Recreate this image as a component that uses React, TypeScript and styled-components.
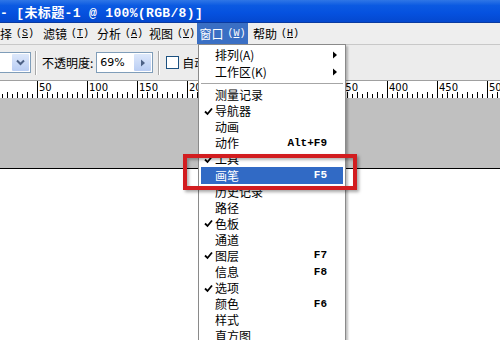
import React from "react";
import styled, { createGlobalStyle } from "styled-components";

const Global = createGlobalStyle`
  html, body { margin: 0; padding: 0; }
  body { width: 500px; height: 340px; overflow: hidden; background: #fff;
    font-family: "Noto Sans CJK SC", "DejaVu Sans", sans-serif; font-size: 12px; }
`;

const Page = styled.div`
  position: relative;
  width: 500px;
  height: 340px;
  display: flex;
  flex-direction: column;
  overflow: hidden;
`;

const TitleBar = styled.div`
  height: 23px;
  flex: none;
  background: linear-gradient(#2f76e6 0%, #0b5ae2 25%, #0551df 60%, #0448cf 100%);
  border-bottom: 1px solid #0a3aa0;
  box-sizing: border-box;
  color: #fff;
  font-family: "Liberation Mono", "Noto Sans CJK SC", monospace;
  font-weight: bold;
  font-size: 13px;
  display: flex;
  align-items: center;
  white-space: pre;
  letter-spacing: 0.35px;
`;

const MenuBar = styled.div`
  height: 21px;
  flex: none;
  background: #eeeeee;
  border-bottom: 1px solid #c8c8c8;
  display: flex;
  align-items: stretch;
`;

const MenuTitle = styled.div<{ $active?: boolean; $w: number; $left?: boolean }>`
  width: ${(p) => p.$w}px;
  flex: none;
  display: flex;
  align-items: center;
  justify-content: ${(p) => (p.$left ? "flex-start" : "center")};
  box-sizing: border-box;
  font-size: 12px;
  color: ${(p) => (p.$active ? "#fff" : "#000")};
  background: ${(p) => (p.$active ? "#3a6fc4" : "transparent")};
  white-space: nowrap;
`;

const Key = styled.span`
  font-size: 10px;
  font-family: "Liberation Mono", monospace;
  margin-left: 4px;
  & u { text-underline-offset: 1px; }
`;

const OptionsBar = styled.div`
  height: 35px;
  flex: none;
  background: #ececec;
  display: flex;
  align-items: center;
`;

const ComboBox = styled.div<{ $w: number; $noLeft?: boolean }>`
  width: ${(p) => p.$w}px;
  height: 21px;
  box-sizing: border-box;
  border: 1px solid #7f9db9;
  border-left-width: ${(p) => (p.$noLeft ? 0 : 1)}px;
  background: #fff;
  display: flex;
  align-items: stretch;
`;

const ComboText = styled.div`
  flex: 1;
  display: flex;
  align-items: center;
  padding-left: 3px;
  font-family: "DejaVu Sans", sans-serif;
  font-size: 11px;
`;

const ComboButton = styled.div`
  width: 17px;
  background: linear-gradient(#dde8fb, #b9cdf3);
  border: 1px solid #fff;
  border-radius: 2px;
  display: flex;
  align-items: center;
  justify-content: center;
`;

const Sep = styled.div<{ $ml: number; $mr: number }>`
  width: 1px;
  height: 24px;
  background: #a8a8a8;
  border-right: 1px solid #fff;
  margin-left: ${(p) => p.$ml}px;
  margin-right: ${(p) => p.$mr}px;
`;

const Label = styled.div<{ $mr: number }>`
  font-size: 12px;
  margin-right: ${(p) => p.$mr}px;
  white-space: nowrap;
`;

const CheckBox = styled.div`
  width: 11px;
  height: 11px;
  border: 1px solid #1c5180;
  background: #fff;
  margin-right: 3px;
`;

const RulerWrap = styled.div`
  height: 17px;
  flex: none;
  background: #fff;
  border-top: 1px solid #a0a0a0;
  & svg { display: block; }
`;

const GrayArea = styled.div`
  height: 70px;
  flex: none;
  background: #c0c0c0;
  border-bottom: 1px solid #000;
`;

const WhiteArea = styled.div`
  flex: 1;
  background: #fff;
`;

const Dropdown = styled.div`
  position: absolute;
  left: 198px;
  top: 44px;
  width: 148px;
  bottom: -10px;
  box-sizing: border-box;
  background: #fff;
  border: 1px solid #8a8a8a;
  box-shadow: 2px 2px 2px rgba(0, 0, 0, 0.25);
  padding: 1px 2px;
  display: flex;
  flex-direction: column;
`;

const Item = styled.div<{ $active?: boolean; $h: number }>`
  height: ${(p) => p.$h}px;
  flex: none;
  display: grid;
  grid-template-columns: 14px 1fr auto 16px;
  align-items: center;
  color: ${(p) => (p.$active ? "#fff" : "#000")};
  background: ${(p) => (p.$active ? "#316ac5" : "transparent")};
  font-size: 12px;
  line-height: 1;
`;

const CheckCell = styled.span`
  padding-left: 3px;
  display: flex;
  align-items: center;
`;

const ArrowCell = styled.span`
  display: flex;
  justify-content: center;
`;

const Shortcut = styled.span`
  font-family: "Liberation Mono", monospace;
  font-size: 11px;
  font-weight: bold;
`;

const MenuSep = styled.div`
  height: 7px;
  flex: none;
  display: flex;
  align-items: center;
  &::after { content: ""; display: block; width: 100%; height: 1px; background: #a6a6a6; }
`;

const RedBox = styled.div`
  position: absolute;
  left: 183px;
  top: 154px;
  width: 174px;
  height: 36px;
  box-sizing: border-box;
  border: 4px solid #d21d20;
  box-shadow: 2px 2px 3px rgba(0, 0, 0, 0.35), inset 2px 2px 3px rgba(0, 0, 0, 0.3);
  pointer-events: none;
`;

const Check = () => (
  <svg width="9" height="9" viewBox="0 0 9 9">
    <path d="M1 4.5 L3.5 7 L8 1.5" stroke="#000" strokeWidth="1.8" fill="none" />
  </svg>
);

const SubArrow = () => (
  <svg width="8" height="8" viewBox="0 0 8 8">
    <path d="M2 0.5 L6 4 L2 7.5 Z" fill="#000" />
  </svg>
);

const Ruler = () => {
  const ticks: React.ReactNode[] = [];
  const labels: React.ReactNode[] = [];
  const origin = -13;
  for (let u = 0; u <= 520; u += 5) {
    const x = origin + u + 0.5;
    if (x < 0 || x > 500) continue;
    let h = 4;
    if (u % 50 === 0) h = 17;
    else if (u % 10 === 0) h = 6;
    ticks.push(<line key={u} x1={x} x2={x} y1={17 - h} y2={17} stroke="#000" strokeWidth="1" />);
    if (u % 50 === 0) {
      labels.push(
        <text key={"t" + u} x={x + 1.5} y={9.5} fontSize="10" fontFamily="DejaVu Sans, sans-serif" fill="#000">
          {u}
        </text>
      );
    }
  }
  return (
    <svg width="500" height="17">
      {ticks}
      {labels}
    </svg>
  );
};

type MI = { label: string; check?: boolean; sc?: string; sub?: boolean; active?: boolean };
const topItems: MI[] = [
  { label: "排列(A)", sub: true },
  { label: "工作区(K)", sub: true },
];
const items: MI[] = [
  { label: "测量记录" },
  { label: "导航器", check: true },
  { label: "动画" },
  { label: "动作", sc: "Alt+F9" },
  { label: "工具", check: true },
  { label: "画笔", sc: "F5", active: true },
  { label: "历史记录" },
  { label: "路径" },
  { label: "色板", check: true },
  { label: "通道" },
  { label: "图层", check: true, sc: "F7" },
  { label: "信息", sc: "F8" },
  { label: "选项", check: true },
  { label: "颜色", sc: "F6" },
  { label: "样式" },
  { label: "直方图" },
];

const renderItem = (m: MI, h: number, i: number) => (
  <Item key={i} $h={h} $active={m.active}>
    <CheckCell>{m.check ? <Check /> : null}</CheckCell>
    <span>{m.label}</span>
    <Shortcut>{m.sc}</Shortcut>
    <ArrowCell>{m.sub ? <SubArrow /> : null}</ArrowCell>
  </Item>
);

export default function App() {
  return (
    <Page>
      <Global />
      <TitleBar>{"- [未标题-1 @ 100%(RGB/8)]"}</TitleBar>
      <MenuBar>
        <MenuTitle $w={39} $left>
          择<Key>(<u>S</u>)</Key>
        </MenuTitle>
        <MenuTitle $w={54}>
          滤镜<Key>(<u>T</u>)</Key>
        </MenuTitle>
        <MenuTitle $w={54}>
          分析<Key>(<u>A</u>)</Key>
        </MenuTitle>
        <MenuTitle $w={50}>
          视图<Key>(<u>V</u>)</Key>
        </MenuTitle>
        <MenuTitle $w={51} $active>
          窗口<Key>(<u>W</u>)</Key>
        </MenuTitle>
        <MenuTitle $w={56}>
          帮助<Key>(<u>H</u>)</Key>
        </MenuTitle>
      </MenuBar>
      <OptionsBar>
        <ComboBox $w={31} $noLeft>
          <ComboText />
          <ComboButton>
            <svg width="9" height="7" viewBox="0 0 9 7">
              <path d="M1 1.5 L4.5 5 L8 1.5" stroke="#4d6185" strokeWidth="2" fill="none" />
            </svg>
          </ComboButton>
        </ComboBox>
        <Sep $ml={4} $mr={5} />
        <Label $mr={3}>不透明度:</Label>
        <ComboBox $w={57}>
          <ComboText>69%</ComboText>
          <ComboButton>
            <svg width="6" height="8" viewBox="0 0 6 8">
              <path d="M1 0.5 L5 4 L1 7.5 Z" fill="#4d6185" />
            </svg>
          </ComboButton>
        </ComboBox>
        <Sep $ml={5} $mr={6} />
        <CheckBox />
        <Label $mr={0}>自动</Label>
      </OptionsBar>
      <RulerWrap>
        <Ruler />
      </RulerWrap>
      <GrayArea />
      <WhiteArea />
      <Dropdown>
        {topItems.map((m, i) => renderItem(m, 17, i))}
        <MenuSep />
        {items.map((m, i) => renderItem(m, 16.1, i + 10))}
      </Dropdown>
      <RedBox />
    </Page>
  );
}
